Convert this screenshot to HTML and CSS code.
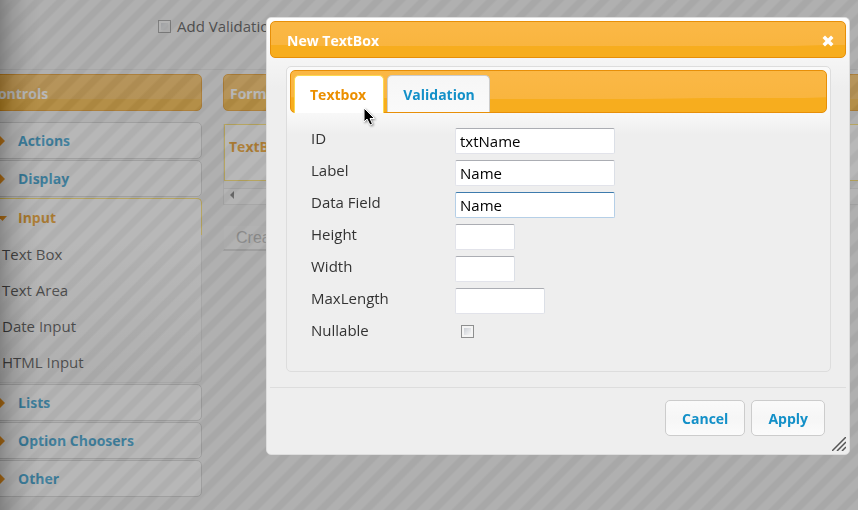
FILE: index.html
```html
<!DOCTYPE html>
<html lang="en">
<head>
<meta charset="utf-8">
<title>Form Builder</title>
<link rel="stylesheet" href="styles.css">
</head>
<body>
<div class="page">
  <header class="topbar">
    <label class="check-label"><input type="checkbox" class="check"> Add Validation</label>
  </header>
  <main class="workspace">
    <aside class="sidebar">
      <h2 class="bar">Controls</h2>
      <nav class="accordion">
        <button class="acc-head" type="button"><svg class="arrow" viewBox="0 0 8 10"><path d="M2 0L7 5L2 10Z"/></svg>Actions</button>
        <button class="acc-head" type="button"><svg class="arrow" viewBox="0 0 8 10"><path d="M2 0L7 5L2 10Z"/></svg>Display</button>
        <button class="acc-head acc-open" type="button"><svg class="arrow" viewBox="0 0 8 10"><path d="M0 3H9L4.500 8Z"/></svg>Input</button>
        <ul class="acc-body">
          <li>Text Box</li>
          <li>Text Area</li>
          <li>Date Input</li>
          <li>HTML Input</li>
        </ul>
        <button class="acc-head" type="button"><svg class="arrow" viewBox="0 0 8 10"><path d="M2 0L7 5L2 10Z"/></svg>Lists</button>
        <button class="acc-head" type="button"><svg class="arrow" viewBox="0 0 8 10"><path d="M2 0L7 5L2 10Z"/></svg>Option Choosers</button>
        <button class="acc-head" type="button"><svg class="arrow" viewBox="0 0 8 10"><path d="M2 0L7 5L2 10Z"/></svg>Other</button>
      </nav>
    </aside>
    <section class="canvas">
      <h2 class="bar">Form</h2>
      <div class="drop">
        <div class="field-card">TextBox</div>
        <div class="scroll"><svg class="scroll-arrow" viewBox="0 0 4 8"><path d="M4 0V8L0 4Z"/></svg></div>
      </div>
      <button class="create" type="button">Create</button>
    </section>
  </main>
</div>
<div class="overlay"></div>
<div class="dialog" role="dialog" aria-labelledby="dialog-title">
  <div class="titlebar">
    <h1 class="title" id="dialog-title">New TextBox</h1>
    <button class="close" type="button" aria-label="Close"><svg viewBox="0 0 12 12"><path d="M3 3L9 9M9 3L3 9"/></svg></button>
  </div>
  <div class="tabs">
    <div class="tablist" role="tablist">
      <button class="tab tab-active" type="button" role="tab" aria-selected="true">Textbox</button>
      <button class="tab" type="button" role="tab" aria-selected="false">Validation</button>
    </div>
    <form class="form" id="props">
      <label for="f-id">ID</label><input class="text" id="f-id" type="text" value="txtName">
      <label for="f-label">Label</label><input class="text" id="f-label" type="text" value="Name">
      <label for="f-data">Data Field</label><input class="text current" id="f-data" type="text" value="Name">
      <label for="f-height">Height</label><input class="text short" id="f-height" type="text">
      <label for="f-width">Width</label><input class="text short" id="f-width" type="text">
      <label for="f-max">MaxLength</label><input class="text medium" id="f-max" type="text">
      <label for="f-null">Nullable</label><input class="check indent" id="f-null" type="checkbox">
    </form>
  </div>
  <div class="actions">
    <button class="btn" type="button">Cancel</button>
    <button class="btn" type="button">Apply</button>
  </div>
  <svg class="grip" viewBox="0 0 14 14"><path d="M0 14L14 0M5 14L14 5M10 14L14 10"/></svg>
  <svg class="pointer" viewBox="0 0 12 19"><path d="M1 1V15L4 12L7 18L9.500 17L7 11.500H11.500Z"/></svg>
</div>
</body>
</html>
```

FILE: styles.css
```css
* { box-sizing: border-box; }
body {
  margin: 0;
  height: 100vh;
  overflow: hidden;
  background: #eee;
  color: #333;
  font: 15px/20px "Trebuchet MS", "Open Sans", sans-serif;
}
button, input { font: inherit; margin: 0; }
h1, h2 { margin: 0; font-size: 14px; line-height: 20px; }

.topbar { height: 70px; padding: 16px 0 0 158px; border-bottom: 1px solid #ddd; }
.check-label { display: flex; align-items: center; gap: 6px; white-space: nowrap; }
.check {
  appearance: none;
  width: 13px;
  height: 13px;
  border: 1px solid #8e8f8f;
  background: linear-gradient(135deg, #cbcfd5, #f6f6f6) content-box, #f4f4f4;
  padding: 2px;
}
.workspace { display: flex; gap: 21px; padding-top: 4px; }
.sidebar { width: 222px; margin-left: -20px; flex: none; }
.canvas { flex: 1; margin-right: -20px; }
.bar {
  height: 37px;
  padding: 9px 6px 7px;
  border: 1px solid #e78f08;
  border-radius: 5px;
  background: linear-gradient(#fbb846, #f9b53f 68%, #f7ad1e 70%, #f7ad1e);
  color: #fff;
}
.sidebar .bar { padding-left: 8px; }
.accordion { margin-top: 11px; display: grid; gap: 1px; }
.acc-head {
  display: flex;
  align-items: center;
  width: 100%;
  height: 37px;
  padding: 1px 0 0 17px;
  border: 1px solid #ccc;
  border-radius: 5px;
  background: #fcfcfc;
  color: #1390c8;
  font-size: 14px;
  font-weight: bold;
}
.arrow { width: 8px; height: 10px; margin-right: 12px; fill: #ef8c08; overflow: visible; }
.acc-open { border-color: #fbd850; border-bottom: 0; border-radius: 5px 5px 0 0; background: #fff; color: #eb8f00; }
.acc-body {
  list-style: none;
  margin: -1px 0 0;
  padding: 6px 0 0 21px;
  height: 148px;
  border: 1px solid #ddd;
  border-top: 0;
  border-radius: 0 0 5px 5px;
  background: linear-gradient(#fff, #eee);
}
.acc-body li { height: 36px; padding-top: 3px; }
.drop { margin-top: 13px; border-left: 1px solid #ddd; }
.field-card { height: 57px; padding: 12px 4px; border: 1px solid #fbd850; background: #fff; color: #eb8f00; font-weight: bold; font-size: 14px; }
.scroll { height: 24px; padding: 10px 6px 0; border-bottom: 1px solid #ddd; background: linear-gradient(#eee 7px, #ddd 7px, #ddd 8px, #f6f6f6 8px); }
.scroll-arrow { display: block; width: 4px; height: 8px; fill: #666; }
.create { display: block; margin-top: 20px; width: 100px; height: 26px; padding: 0 12px; text-align: left; border: 1px solid #eee; border-bottom: 2px solid #ccc; background: #f2f2f2; color: #aaa; font: 16px/20px "Liberation Sans", sans-serif; }

.overlay {
  position: fixed;
  inset: 0;
  opacity: .5;
  background:
    linear-gradient(90deg, rgba(0, 0, 0, .8), rgba(0, 0, 0, .4) 12px, rgba(0, 0, 0, .12) 26px, transparent 40px),
    repeating-linear-gradient(135deg, #727272 0, #727272 7px, #626262 9px, #626262 14px, #727272 16px);
}

.dialog {
  position: absolute;
  left: 266px;
  top: 17px;
  right: 8px;
  border: 1px solid #ddd;
  border-radius: 5px;
  padding: 3px;
  background: linear-gradient(#fff, #eee 70px);
}
.titlebar { display: flex; align-items: center; justify-content: space-between; height: 37px; padding: 2px 11px 0 16px; border: 1px solid #e78f08; border-radius: 5px; background: radial-gradient(ellipse 160% 66% at 50% 4%, #fbb846, #f9b53f 99%, #f7ad1e); }
.title { color: #fff; }
.close { width: 12px; height: 12px; padding: 0; border: 0; background: none; }
.close svg { display: block; fill: none; stroke: #fff; stroke-width: 3.500; stroke-linecap: square; }
.tabs { margin: 8px 15px 15px 16px; padding: 3px; height: 306px; border: 1px solid #ddd; border-radius: 5px; background: linear-gradient(#fafafa 42px, #eee 68px); }
.tablist { display: flex; align-items: flex-end; gap: 3px; height: 43px; padding: 0 3px; border: 1px solid #e78f08; border-radius: 5px; background: radial-gradient(ellipse 160% 64% at 50% 4%, #fbb846, #f9b53f 99%, #f7ad1e); }
.tab { height: 37px; padding: 1px 14px 0 15px; border: 1px solid #ccc; border-bottom: 0; border-radius: 5px 5px 0 0; background: linear-gradient(#f6f6f6, #fafafa); color: #1390c8; font-weight: bold; font-size: 14px; }
.tab-active { height: 38px; padding: 1px 17px 1px 15px; margin-bottom: -1px; border-color: #fbd850; background: #fff; color: #eb8f00; }
.form { display: grid; grid-template-columns: 144px 1fr; row-gap: 6px; padding: 15px 21px; }
.form label { height: 26px; line-height: 20px; }
.text { width: 160px; height: 26px; padding: 0 4px; border: 1px solid #e2e3ea; border-top-color: #abadb3; border-right-color: #dbdfe6; border-radius: 2px; background: #fff; color: #000; outline: 0; }
.current { border-color: #b5cfe7; border-top-color: #3d7bad; }
.short { width: 60px; }
.medium { width: 90px; }
.indent { margin: 5px 0 0 6px; }
.actions { display: flex; justify-content: flex-end; gap: 6px; padding: 12px 21px 15px; border-top: 1px solid #ddd; }
.btn { height: 36px; padding: 1px 16px 0; border: 1px solid #ccc; border-radius: 5px; background: linear-gradient(#fafafa, #f6f6f6 50%, #fbfbfb); color: #1390c8; font-weight: bold; font-size: 14px; }
.grip { position: absolute; right: 3px; bottom: 3px; width: 14px; height: 14px; fill: none; stroke: #555; stroke-width: 1.500; }
.pointer { position: absolute; left: 96px; top: 89px; width: 12px; height: 19px; fill: #000; stroke: #fff; filter: drop-shadow(1px 1px 1px #888); }
```
